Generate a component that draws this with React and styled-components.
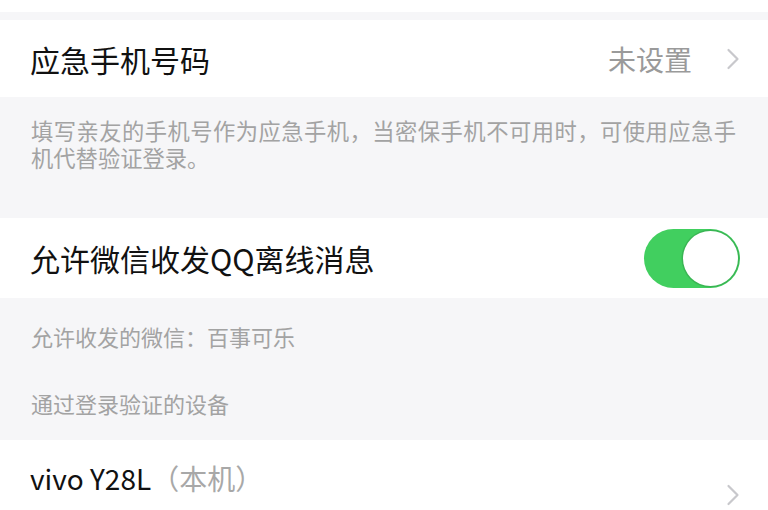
import React, { useState } from "react";
import styled, { createGlobalStyle } from "styled-components";

const GlobalStyle = createGlobalStyle`
  html, body {
    margin: 0;
    padding: 0;
    background: #f6f6f8;
    font-family: "Noto Sans CJK SC", "Noto Sans", sans-serif;
    -webkit-font-smoothing: antialiased;
  }
`;

const Page = styled.div`
  width: 768px;
  display: flex;
  flex-direction: column;
`;

const TopStrip = styled.div`
  height: 12px;
  background: #fff;
  margin-bottom: 8px;
`;

const Row = styled.div`
  background: #fff;
  height: ${p => p.height}px;
  padding: 0 28px 0 30px;
  display: flex;
  align-items: ${p => (p.top ? "flex-start" : "center")};
  justify-content: space-between;
  box-sizing: border-box;
`;

const Title = styled.div`
  font-size: ${p => p.size || 30}px;
  line-height: 38px;
  color: #111;
  padding-top: ${p => p.offset || 0}px;
  white-space: nowrap;
`;

const Muted = styled.span`
  color: #a8a8a8;
`;

const Right = styled.div`
  display: flex;
  align-items: center;
  gap: 34px;
  align-self: center;
  font-size: 28px;
  color: #9a9a9a;
`;

const Chevron = () => (
  <svg width="14" height="22" viewBox="0 0 14 22">
    <path
      d="M2.5 2 L11.5 11 L2.5 20"
      fill="none"
      stroke="#c8c8cc"
      strokeWidth="2.2"
      strokeLinecap="round"
      strokeLinejoin="round"
    />
  </svg>
);

const Note = styled.div`
  padding: ${p => p.pad};
  font-size: ${p => p.size || 22}px;
  line-height: 27px;
  color: #a3a3a3;
  text-align: ${p => (p.justify ? "justify" : "left")};
`;

const Section = styled.div`
  height: ${p => p.height}px;
  box-sizing: border-box;
  display: flex;
  flex-direction: column;
`;

const Toggle = styled.button`
  width: 96px;
  height: 59px;
  border-radius: 30px;
  border: none;
  padding: 2px;
  background: ${p => (p.on ? "#41cf5f" : "#e5e5ea")};
  display: flex;
  justify-content: ${p => (p.on ? "flex-end" : "flex-start")};
  align-items: center;
  box-sizing: border-box;
  cursor: pointer;
`;

const Knob = styled.span`
  width: 55px;
  height: 55px;
  border-radius: 50%;
  background: #fff;
  box-shadow: 0 0 0 1.5px rgba(0, 0, 0, 0.12);
`;

export default function App() {
  const [allow, setAllow] = useState(true);
  return (
    <Page>
      <GlobalStyle />
      <TopStrip />
      <Row height={77}>
        <Title>应急手机号码</Title>
        <Right>
          <span>未设置</span>
          <Chevron />
        </Right>
      </Row>
      <Section height={121}>
        <Note pad="20px 32px 0 31px" size={22.3} justify>
          填写亲友的手机号作为应急手机，当密保手机不可用时，可使用应急手机代替验证登录。
        </Note>
      </Section>
      <Row height={80}>
        <Title>允许微信收发QQ离线消息</Title>
        <Toggle on={allow ? 1 : 0} onClick={() => setAllow(!allow)}>
          <Knob />
        </Toggle>
      </Row>
      <Section height={142}>
        <Note pad="25px 30px 0 31px">允许收发的微信：百事可乐</Note>
        <Note pad="40px 30px 0 31px">通过登录验证的设备</Note>
      </Section>
      <Row height={110} top>
        <Title offset={19} size={28}>
          vivo Y28L<Muted>（本机）</Muted>
        </Title>
        <Right>
          <Chevron />
        </Right>
      </Row>
    </Page>
  );
}
